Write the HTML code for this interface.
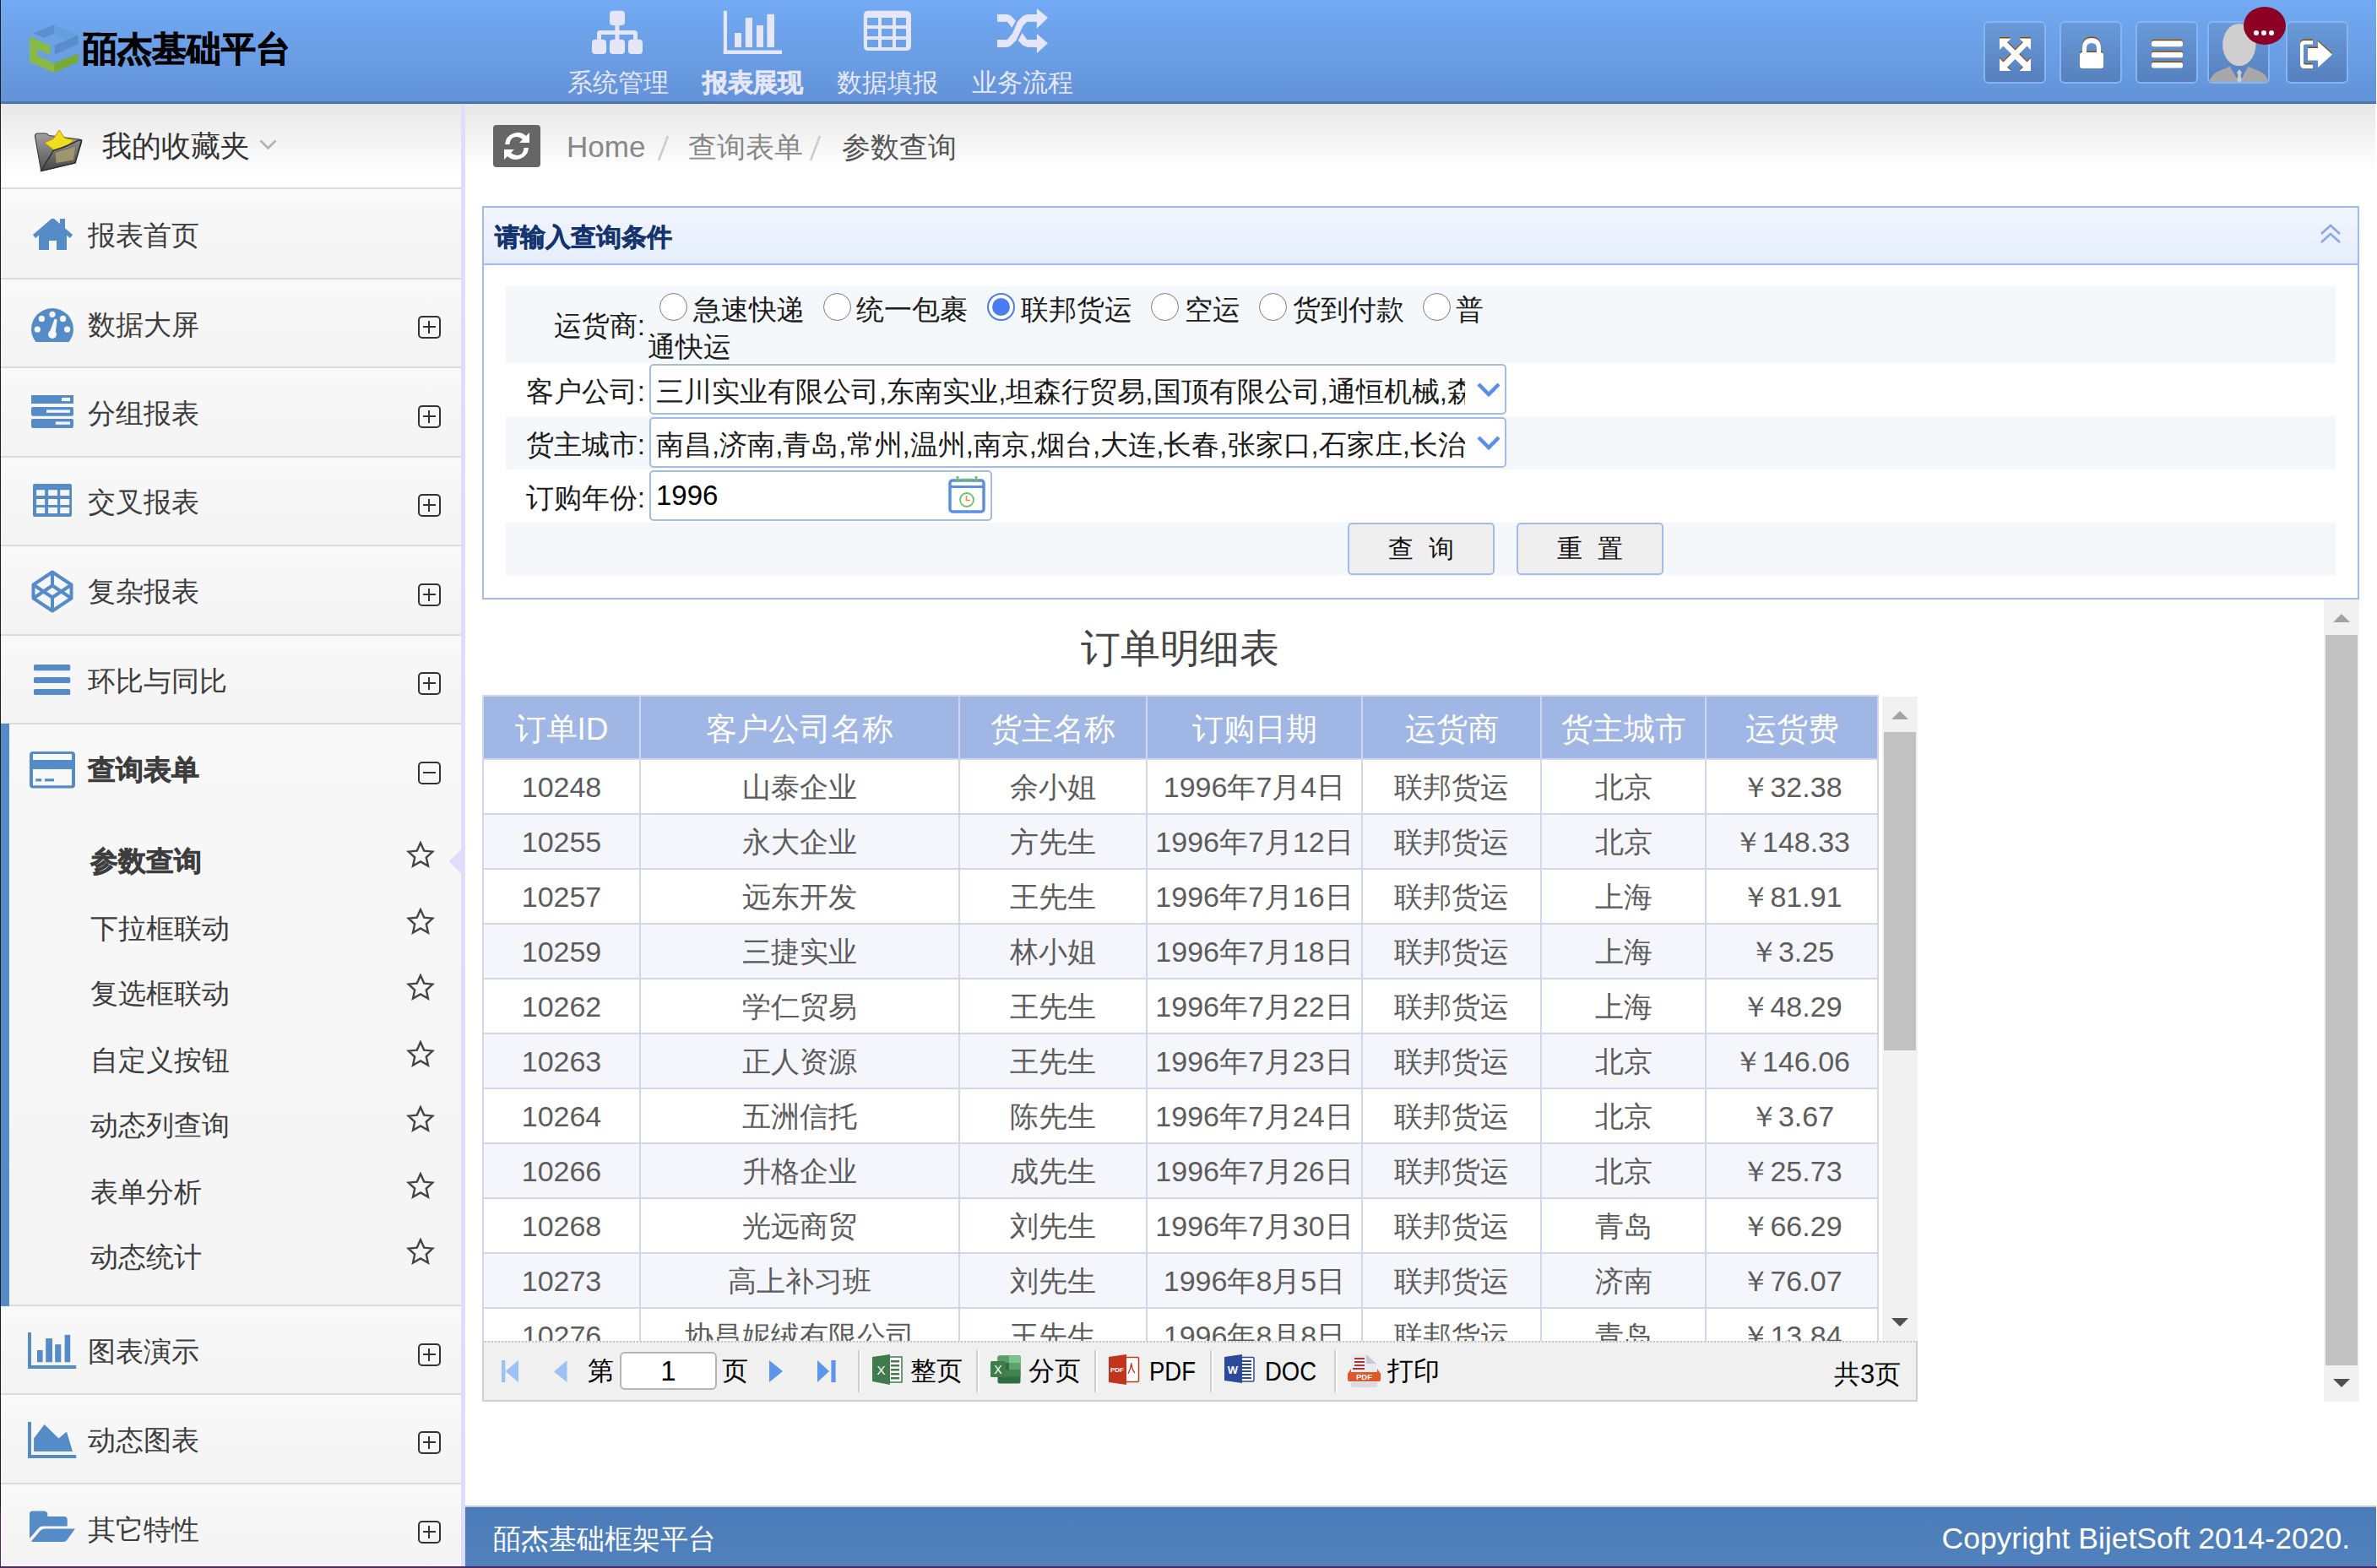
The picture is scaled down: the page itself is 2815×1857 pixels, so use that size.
<!DOCTYPE html>
<html><head><meta charset="utf-8">
<style>
*{box-sizing:border-box;margin:0;padding:0}
html,body{width:2815px;height:1857px;overflow:hidden;background:#fff;font-family:"Liberation Sans",sans-serif}
.abs{position:absolute}
#winl{position:absolute;left:0;top:0;width:1px;height:1857px;background:linear-gradient(#1e1e1e 0,#1e1e1e 1780px,#4a2a5c 1800px)}
#winb{position:absolute;left:0;top:1855px;width:2815px;height:2px;background:#4e2a62}
/* header */
#hdr{position:absolute;left:1px;top:0;width:2813px;height:122px;background:linear-gradient(#72aaf3,#6393d8);border-bottom:2px solid #4d76ae}
.nav{position:absolute;top:0;height:119px;color:#e6e6fa;font-size:30px;text-align:center;white-space:nowrap}
.nav svg{position:absolute}
.nav span{position:absolute;left:0;right:0;top:79px;line-height:38px}
.tbtn{position:absolute;top:25px;width:74px;height:74px;border:2px solid #86b5f2;border-radius:6px;background:linear-gradient(#6a9ad9,#5580bd)}
/* sidebar */
#side{position:absolute;left:1px;top:122px;width:546px;height:1733px;background:#f7f7f7}
#sideb{position:absolute;left:546px;top:122px;width:5px;height:1733px;background:#dedefc}
.fav{position:absolute;left:0;top:0;width:546px;height:102px;background:linear-gradient(#e7e7e7,#fff 85%);border-bottom:2px solid #dcdcdc}
.mi{position:absolute;left:0;width:546px;background:linear-gradient(#f9f9f9,#f3f3f3);border-bottom:2px solid #dcdcdc;font-size:33px;color:#3d3d3d}
.mi .t{position:absolute;left:103px;line-height:40px}
.mi svg{position:absolute}
.pbox{position:absolute;left:494px;width:27px;height:27px;border:2.5px solid #333;border-radius:5px}
.pbox:before{content:"";position:absolute;left:4px;right:4px;top:10px;height:2px;background:#333}
.pbox.p:after{content:"";position:absolute;top:4px;bottom:4px;left:10px;width:2px;background:#333}
.sub{position:absolute;left:106px;font-size:33px;color:#3d3d3d;line-height:40px}
.star{position:absolute;left:480px}
/* main */
#crumb{position:absolute;left:551px;top:122px;width:2262px;height:100px;background:linear-gradient(#e6e6e6,#fff 80%)}
.lbl{position:absolute;left:560px;width:204px;text-align:right;font-size:33px;line-height:44px;color:#1c1c1c;white-space:nowrap}
.rad{position:absolute;width:33px;height:33px;border:1.5px solid #777;border-radius:50%;background:#fff}
.rad.on{border:2px solid #4c7df0}
.rad.on:after{content:"";position:absolute;left:4px;top:4px;width:21px;height:21px;border-radius:50%;background:#4c7df0}
.rtx{position:absolute;font-size:33px;line-height:44px;color:#1c1c1c;white-space:nowrap}
.sel{position:absolute;left:769px;width:1015px;height:60px;border:2px solid #a3bbe8;border-radius:5px;background:#fff;overflow:hidden}
.sel span{position:absolute;left:6px;top:9px;font-size:33px;line-height:44px;color:#1c1c1c;white-space:nowrap;width:958px;overflow:hidden}
.btn{position:absolute;top:619px;width:174px;height:62px;border:2px solid #a3bbe8;border-radius:5px;background:#efefef;font-size:30px;line-height:58px;text-align:center;color:#111;white-space:pre;letter-spacing:5px;padding-left:5px}
.rt{border-collapse:collapse;table-layout:fixed;width:1654px;font-size:34px;color:#5c5c5c}
.rt td{border:2px solid #d0d7ec;text-align:center;height:65px;padding:0;white-space:nowrap;overflow:hidden;line-height:40px}
.rt tr.hd td{background:#a0b6e4;color:#fff;font-size:37px;height:75px;padding-top:4px}
.rt tr.alt td{background:#f5f6fb}
.rt tr td{background:#fff}
.ttx{position:absolute;top:1604px;font-size:31px;line-height:40px;color:#000;white-space:nowrap}
.ttx.lat{font-size:32px;transform:scaleX(0.86);transform-origin:0 0}
.tsep{position:absolute;top:1599px;width:4px;height:50px;border-left:2px solid #cfcfcf;border-right:2px solid #fafafa}
</style></head><body>
<div id="winl"></div>
<div id="hdr"></div>
<svg class="abs" style="left:35px;top:29px" width="59" height="59" viewBox="0 0 59 59">
 <polygon points="4.1,10.3 29.4,0.2 29.4,10.9 17.4,15.5" fill="#5a90d2"/>
 <polygon points="29.4,0.2 57.6,12.6 43.9,18.6 29.4,10.9" fill="#62a0dd"/>
 <polygon points="43.9,18.6 57.6,12.6 57.6,23 29.8,35.8 29.8,25" fill="#5a8bcb"/>
 <polygon points="0,14.2 24.8,25 24.8,36.2 9.9,29.6 9.9,37.4 29.4,45.7 29.4,57.3 0,44.3" fill="#89b947"/>
 <polygon points="29.4,45.7 57.8,34.5 57.8,44 29.4,57.3" fill="#77ab36"/>
</svg>
<div class="abs" style="left:98px;top:26px;font-size:41px;font-weight:bold;-webkit-text-stroke:0.8px #000;color:#000;line-height:64px;white-space:nowrap;letter-spacing:0px">皕杰基础平台</div>
<div class="nav" style="left:652px;width:160px">
 <svg style="left:49px;top:12px" width="61" height="53" viewBox="0 0 61 53">
  <g fill="#e6e6fa">
  <rect x="21" y="0.8" width="18" height="17.2" rx="4"/>
  <rect x="27.4" y="16" width="5" height="20"/>
  <path d="M6,34.7 V28 Q6,24 10,24 H50 Q54,24 54,28 V34.7 H49 V29 H11 V34.7Z"/>
  <rect x="0" y="34.7" width="17" height="17.3" rx="4"/>
  <rect x="21" y="34.7" width="18" height="17.3" rx="4"/>
  <rect x="43" y="34.7" width="17" height="17.3" rx="4"/>
  </g>
 </svg>
 <span>系统管理</span></div>
<div class="nav" style="left:811px;width:160px;font-weight:bold">
 <svg style="left:45px;top:12px" width="71" height="53" viewBox="0 0 71 53">
  <g fill="#e6e6fa">
  <rect x="0.8" y="0.8" width="4.2" height="51.2"/>
  <rect x="0.8" y="47.5" width="69.2" height="4.5"/>
  <rect x="14" y="27" width="8" height="16.9"/>
  <rect x="26.8" y="9" width="8.2" height="34.9"/>
  <rect x="39.9" y="18" width="8.1" height="25.9"/>
  <rect x="52.4" y="4.8" width="8.6" height="39.1"/>
  </g>
 </svg>
 <span style="letter-spacing:-0.5px;-webkit-text-stroke:0.6px #e6e6fa">报表展现</span></div>
<div class="nav" style="left:971px;width:160px">
 <svg style="left:51px;top:12px" width="58" height="50" viewBox="0 0 58 50">
  <path fill="#e6e6fa" fill-rule="evenodd" d="M6,0.8 H51 Q57,0.8 57,7 V42 Q57,48 51,48 H6 Q0.8,48 0.8,42 V7 Q0.8,0.8 6,0.8Z M5,9 V18 H18 V9Z M22,9 V18 H35 V9Z M39,9 V18 H51 V9Z M5,22 V31 H18 V22Z M22,22 V31 H35 V22Z M39,22 V31 H51 V22Z M5,35 V44 H18 V35Z M22,35 V44 H35 V35Z M39,35 V44 H51 V35Z"/>
 </svg>
 <span>数据填报</span></div>
<div class="nav" style="left:1131px;width:160px">
 <svg style="left:48px;top:9px" width="64" height="56" viewBox="0 0 64 56">
  <g fill="#e6e6fa">
   <polygon points="2,8 13.8,8 17,9 20,11.5 23.9,15.8 19.3,23.8 16,19.5 13.8,16.8 2,16.8"/>
   <polygon points="2,38.1 13.8,38.1 20.1,30.5 26,16.6 32.3,9.9 37.4,8 49,8 49,16.8 37.4,16.8 32.7,21.2 24.7,38.5 17.6,45.6 13.8,46.9 2,46.9"/>
   <polygon points="31.5,30 37.4,38.1 49,38.1 49,46.9 38.2,46.9 32.3,44.8 26.9,38.9"/>
   <polygon points="48.9,1 62,12 48.9,24.8"/>
   <polygon points="48.9,30.9 62,42.2 48.9,54"/>
  </g>
 </svg>
 <span>业务流程</span></div>
<div class="tbtn" style="left:2349px"></div>
<svg class="abs" style="left:2366px;top:43px" width="42" height="44" viewBox="0 0 42 44">
 <defs><g id="expi">
  <path d="M2,2.5 H15.5 L11,7 L20.5,16.5 L30,7 L25.5,2.5 H39 V16 L34.5,11.5 L25,21 L34.5,30.5 L39,26 V41 H25.5 L30,36.5 L20.5,27 L11,36.5 L15.5,41 H2 V26 L6.5,30.5 L16,21 L6.5,11.5 L2,16Z"/>
 </g></defs>
 <use href="#expi" fill="#8a4a00" transform="translate(0,-1.5)"/>
 <use href="#expi" fill="#fff"/>
</svg>
<div class="tbtn" style="left:2439px"></div>
<svg class="abs" style="left:2460px;top:43px" width="34" height="40" viewBox="0 0 34 40">
 <defs><g id="locki">
  <path d="M6,19 V14 Q6,2 17,2 Q28,2 28,14 V19 H23 V14 Q23,8 17,8 Q11,8 11,14 V19Z"/>
  <rect x="3" y="19" width="28" height="19" rx="3"/>
 </g></defs>
 <use href="#locki" fill="#8a4a00" transform="translate(0,-1.5)"/>
 <use href="#locki" fill="#fff"/>
</svg>
<div class="tbtn" style="left:2529px"></div>
<svg class="abs" style="left:2546px;top:44px" width="42" height="38" viewBox="0 0 42 38">
 <defs><g id="hami">
  <rect x="2" y="4.3" width="37" height="6.9" rx="2.5"/>
  <rect x="2" y="17.8" width="37" height="6.4" rx="2"/>
  <rect x="2" y="30" width="37" height="6.5" rx="2"/>
 </g></defs>
 <use href="#hami" fill="#8a4a00" transform="translate(0,-1.5)"/>
 <use href="#hami" fill="#fff"/>
</svg>
<div class="tbtn" style="left:2614px;overflow:hidden">
 <svg class="abs" style="left:0;top:0" width="70" height="70" viewBox="0 0 70 70">
  <ellipse cx="35.8" cy="26" rx="19.7" ry="25.1" fill="#cfcfcf"/>
  <path d="M0,71 Q2,61 13,56.5 L24.7,51.7 L36,71 L46.4,51.7 L58,56.5 Q69,61 71,71Z" fill="#a8a8a8"/>
  <path d="M33,59 L36,55 L39,59 L37.5,62 L39,68 L36,71 L33,68 L34.5,62Z" fill="#cfcfcf"/>
 </svg>
</div>
<svg class="abs" style="left:2656px;top:7px" width="52" height="47" viewBox="0 0 52 47">
 <ellipse cx="26" cy="23.5" rx="25" ry="22.5" fill="#8b0024"/>
 <circle cx="16" cy="32" r="3" fill="#fff"/><circle cx="25" cy="32" r="3" fill="#fff"/><circle cx="34" cy="32" r="3" fill="#fff"/>
</svg>
<div class="tbtn" style="left:2707px"></div>
<svg class="abs" style="left:2722px;top:46px" width="42" height="38" viewBox="0 0 42 38">
 <defs><g id="exiti">
  <path d="M17,2 V6.5 H8 Q6,6.5 6,8.5 V28.5 Q6,30.5 8,30.5 H17 V35 H7 Q2,35 2,30 V7 Q2,2 7,2Z"/>
  <path d="M11,11 H23 V3 L40,18.5 L23,34 V25.5 H11Z"/>
 </g></defs>
 <use href="#exiti" fill="#8a4a00" transform="translate(0,-1.5)"/>
 <use href="#exiti" fill="#fff"/>
</svg>
<div id="side">
<div class="fav">
 <svg class="abs" style="left:39px;top:31px" width="60" height="52" viewBox="0 0 60 52">
  <defs><linearGradient id="fg1" x1="0" y1="0" x2="0" y2="1"><stop offset="0" stop-color="#a0a0a0"/><stop offset="1" stop-color="#505050"/></linearGradient>
  <linearGradient id="fg2" x1="0" y1="0" x2="0" y2="1"><stop offset="0" stop-color="#8a8a8a"/><stop offset="1" stop-color="#474747"/></linearGradient></defs>
  <path d="M1.5,8.5 Q1.5,5 5,5 L14,5 Q16,5 18,7.5 L54,12 Q57.5,12.5 56.5,15.5 L49,40 L8.7,49.5Z" fill="url(#fg1)" stroke="#3a3a3a" stroke-width="1.2"/>
  <polygon points="30.2,1 36.5,10.5 47.6,12.7 40,19.5 24,25 12.8,16 23,11.5" fill="#eedf1e" stroke="#c88a00" stroke-width="1"/>
  <path d="M23.2,25.2 Q38,21 53,13.1 L56.5,13 L49,40 L8.7,49.5Z" fill="url(#fg2)" stroke="#2e2e2e" stroke-width="1.4"/>
  <polygon points="25.5,28 49,21 47,36.5 26.5,40" fill="#a89d6e" opacity="0.85"/>
 </svg>
 <div class="abs" style="left:120px;top:30px;font-size:35px;color:#333;line-height:42px;white-space:nowrap">我的收藏夹</div>
 <svg class="abs" style="left:306px;top:43px" width="21" height="13" viewBox="0 0 21 13"><path d="M1.5,1.5 L10.5,10.5 L19.5,1.5" fill="none" stroke="#b0b0b0" stroke-width="2.5"/></svg>
</div>
<div class="mi" style="top:103px;height:106px">
 <svg style="left:38px;top:34px" width="47" height="38" viewBox="0 0 47 38"><g fill="#558bc7"><path d="M1.5,21 L23.5,2 L45.5,21" fill="none" stroke="#558bc7" stroke-width="5"/><rect x="32" y="0" width="6" height="12"/><path d="M7,18 L23.5,4 L40,18 V37 H28 V26 H19 V37 H7Z"/></g></svg>
 <div class="t" style="top:33.5px">报表首页</div>
</div>
<div class="mi" style="top:209px;height:105px">
 <svg style="left:36px;top:34px" width="50" height="40" viewBox="0 0 50 40"><path d="M5.5,40 Q0,33 0,25 A25,25 0 0 1 50,25 Q50,33 44.5,40Z" fill="#558bc7"/><g fill="#f6f6f6"><circle cx="25" cy="7.3" r="3.6"/><circle cx="12.4" cy="12.4" r="3.6"/><circle cx="37.6" cy="12.4" r="3.6"/><circle cx="7.3" cy="25.2" r="3.6"/><circle cx="42.6" cy="25.2" r="3.6"/><circle cx="25" cy="31" r="5"/><path d="M21.5,29 L27.5,13 Q29.5,12 30.5,14 L28.5,31Z"/></g></svg>
 <div class="t" style="top:34px">数据大屏</div>
 <div class="pbox p" style="top:43.19999999999999px"></div>
</div>
<div class="mi" style="top:314px;height:106px">
 <svg style="left:36px;top:32px" width="50" height="39" viewBox="0 0 50 39"><g fill="#558bc7"><rect x="0" y="0" width="50" height="10"/><rect x="0" y="14" width="50" height="10.8" rx="2"/><rect x="0" y="28" width="50" height="11" rx="2"/></g><g fill="#f6f6f6"><rect x="36" y="3" width="10" height="4"/><rect x="18" y="17.4" width="28" height="3.4"/><rect x="28.8" y="31.4" width="17.2" height="3.4"/></g></svg>
 <div class="t" style="top:34px">分组报表</div>
 <div class="pbox p" style="top:43.5px"></div>
</div>
<div class="mi" style="top:420px;height:105px">
 <svg style="left:38px;top:31px" width="46" height="39" viewBox="0 0 46 39"><path fill="#558bc7" fill-rule="evenodd" d="M2,0 H44 Q46,0 46,2 V37 Q46,39 44,39 H2 Q0,39 0,37 V2 Q0,0 2,0Z M4.1,7.2 V14.1 H14.1 V7.2Z M18.1,7.2 V14.1 H29 V7.2Z M32.2,7.2 V14.1 H43.2 V7.2Z M4.1,18.1 V25 H14.1 V18.1Z M18.1,18.1 V25 H29 V18.1Z M32.2,18.1 V25 H43.2 V18.1Z M4.1,28.1 V35.1 H14.1 V28.1Z M18.1,28.1 V35.1 H29 V28.1Z M32.2,28.1 V35.1 H43.2 V28.1Z"/></svg>
 <div class="t" style="top:33px">交叉报表</div>
 <div class="pbox p" style="top:43.299999999999955px"></div>
</div>
<div class="mi" style="top:525px;height:106px">
 <svg style="left:36px;top:28px" width="50" height="51" viewBox="0 0 50 51"><g fill="none" stroke="#558bc7" stroke-width="4" stroke-linejoin="round"><polygon points="25,2.5 47.5,17.5 47.5,33.5 25,48.5 2.5,33.5 2.5,17.5"/><path d="M25,2.5 V19 M25,32 V48.5 M2.5,17.5 L25,32.5 L47.5,17.5 M2.5,33.5 L25,18.5 L47.5,33.5"/></g></svg>
 <div class="t" style="top:33.60000000000002px">复杂报表</div>
 <div class="pbox p" style="top:43.5px"></div>
</div>
<div class="mi" style="top:631px;height:105px">
 <svg style="left:39px;top:34px" width="44" height="37" viewBox="0 0 44 37"><g fill="#558bc7"><rect x="0" y="0" width="43.2" height="7.2" rx="1.5"/><rect x="0" y="15" width="43.2" height="7" rx="1.5"/><rect x="0" y="29" width="43.2" height="7" rx="1.5"/></g></svg>
 <div class="t" style="top:34px">环比与同比</div>
 <div class="pbox p" style="top:43.299999999999955px"></div>
</div>
<div class="mi" style="top:736px;height:689px;background:linear-gradient(#f8f8f8,#f4f4f4)">
 <svg style="left:34px;top:32px" width="54" height="44" viewBox="0 0 54 44"><g fill="#558bc7"><path fill-rule="evenodd" d="M4,0 H50 Q54,0 54,4 V39.5 Q54,43.5 50,43.5 H4 Q0,43.5 0,39.5 V4 Q0,0 4,0Z M4,3 V10 H50 V3Z M4,21 V40.3 H50 V21Z"/><rect x="7.2" y="32.2" width="7" height="3.2"/><rect x="18" y="32.2" width="11" height="3.2"/></g></svg>
 <div class="t" style="top:34px;font-weight:bold;-webkit-text-stroke:0.7px currentColor">查询表单</div>
 <div class="pbox" style="top:43.5px"></div>
</div>
<div class="abs" style="left:0;top:735px;width:10px;height:690px;background:#558bc7"></div>
<div class="sub" style="top:878px;font-weight:bold;-webkit-text-stroke:0.7px currentColor">参数查询</div>
<svg class="star" style="top:874.0px" width="34" height="33" viewBox="0 0 34 33"><polygon points="17,2.2 21.2,11.6 31.4,12.6 23.8,19.5 26,29.6 17,24.4 8,29.6 10.2,19.5 2.6,12.6 12.8,11.6" fill="none" stroke="#444" stroke-width="2.4" stroke-linejoin="miter"/></svg>
<div class="sub" style="top:957.7px">下拉框联动</div>
<svg class="star" style="top:953.0px" width="34" height="33" viewBox="0 0 34 33"><polygon points="17,2.2 21.2,11.6 31.4,12.6 23.8,19.5 26,29.6 17,24.4 8,29.6 10.2,19.5 2.6,12.6 12.8,11.6" fill="none" stroke="#444" stroke-width="2.4" stroke-linejoin="miter"/></svg>
<div class="sub" style="top:1035.4px">复选框联动</div>
<svg class="star" style="top:1031.1px" width="34" height="33" viewBox="0 0 34 33"><polygon points="17,2.2 21.2,11.6 31.4,12.6 23.8,19.5 26,29.6 17,24.4 8,29.6 10.2,19.5 2.6,12.6 12.8,11.6" fill="none" stroke="#444" stroke-width="2.4" stroke-linejoin="miter"/></svg>
<div class="sub" style="top:1114px">自定义按钮</div>
<svg class="star" style="top:1109.5px" width="34" height="33" viewBox="0 0 34 33"><polygon points="17,2.2 21.2,11.6 31.4,12.6 23.8,19.5 26,29.6 17,24.4 8,29.6 10.2,19.5 2.6,12.6 12.8,11.6" fill="none" stroke="#444" stroke-width="2.4" stroke-linejoin="miter"/></svg>
<div class="sub" style="top:1191px">动态列查询</div>
<svg class="star" style="top:1187.2px" width="34" height="33" viewBox="0 0 34 33"><polygon points="17,2.2 21.2,11.6 31.4,12.6 23.8,19.5 26,29.6 17,24.4 8,29.6 10.2,19.5 2.6,12.6 12.8,11.6" fill="none" stroke="#444" stroke-width="2.4" stroke-linejoin="miter"/></svg>
<div class="sub" style="top:1269.7px">表单分析</div>
<svg class="star" style="top:1265.5px" width="34" height="33" viewBox="0 0 34 33"><polygon points="17,2.2 21.2,11.6 31.4,12.6 23.8,19.5 26,29.6 17,24.4 8,29.6 10.2,19.5 2.6,12.6 12.8,11.6" fill="none" stroke="#444" stroke-width="2.4" stroke-linejoin="miter"/></svg>
<div class="sub" style="top:1347px">动态统计</div>
<svg class="star" style="top:1343.5px" width="34" height="33" viewBox="0 0 34 33"><polygon points="17,2.2 21.2,11.6 31.4,12.6 23.8,19.5 26,29.6 17,24.4 8,29.6 10.2,19.5 2.6,12.6 12.8,11.6" fill="none" stroke="#444" stroke-width="2.4" stroke-linejoin="miter"/></svg>
<div class="mi" style="top:1425px;height:105px">
 <svg style="left:32px;top:31px" width="58" height="44" viewBox="0 0 58 44"><g fill="#558bc7"><rect x="0" y="0" width="4" height="43"/><rect x="0" y="39" width="57.2" height="4"/><rect x="11" y="21" width="6.6" height="14.2"/><rect x="21.2" y="7.1" width="7.8" height="28.1"/><rect x="32.2" y="14.2" width="7.1" height="21"/><rect x="43.6" y="2.9" width="6.6" height="32.3"/></g></svg>
 <div class="t" style="top:34px">图表演示</div>
 <div class="pbox p" style="top:43.5px"></div>
</div>
<div class="mi" style="top:1530px;height:106px">
 <svg style="left:32px;top:32px" width="58" height="44" viewBox="0 0 58 44"><g fill="#558bc7"><rect x="0" y="0" width="4" height="43"/><rect x="0" y="39" width="57.2" height="4"/><path d="M7.1,35 L7.1,19.5 L19.6,3 L36.5,19.5 L45.9,11.4 L53,35Z"/></g></svg>
 <div class="t" style="top:34px">动态图表</div>
 <div class="pbox p" style="top:43.200000000000045px"></div>
</div>
<div class="mi" style="top:1636px;height:97px;border-bottom:0">
 <svg style="left:34px;top:31px" width="54" height="40" viewBox="0 0 54 40"><g fill="#558bc7"><path d="M0,4 Q0,0.5 3.5,0.5 H17.5 Q20,0.5 21.2,3 V7 H41.2 Q44.7,7 44.7,10.5 V18.4 H16 Q12,18.4 10,21.4 L0,33Z"/><path d="M2,36.5 L12.5,24 Q14.5,21.5 18,21.5 H54 L44.5,34.5 Q43,37 40,37 H3Z"/></g></svg>
 <div class="t" style="top:33.5px">其它特性</div>
 <div class="pbox p" style="top:43.200000000000045px"></div>
</div>
</div>
<div id="sideb"></div>
<svg class="abs" style="left:531px;top:1005px" width="16" height="31" viewBox="0 0 16 31"><polygon points="0.8,15.3 15.5,0.5 15.5,30.4" fill="#dedefc"/></svg>
<div id="crumb"></div>
<div class="abs" style="left:584px;top:148px;width:56px;height:50px;background:#666;border-radius:4px"></div>
<svg class="abs" style="left:593px;top:153px" width="38" height="40" viewBox="0 0 38 40">
 <g fill="#fff">
  <path d="M5,18 Q6,8 15,5 Q24,2 30,8 L34,4 V16 H22 L26,12 Q21,8 16,9.5 Q11,11 10.5,18Z"/>
  <path d="M33,22 Q32,32 23,35 Q14,38 8,32 L4,36 V24 H16 L12,28 Q17,32 22,30.5 Q27,29 27.5,22Z"/>
 </g>
</svg>
<div class="abs" style="left:671px;top:150px;line-height:48px;font-size:35px;color:#888;white-space:nowrap">Home</div>
<svg class="abs" style="left:778px;top:160px" width="15" height="31" viewBox="0 0 15 31"><path d="M13,1 L2,30" stroke="#cccccc" stroke-width="2.6"/></svg>
<div class="abs" style="left:815px;top:150px;line-height:48px;font-size:34px;color:#888;white-space:nowrap">查询表单</div>
<svg class="abs" style="left:958px;top:160px" width="15" height="31" viewBox="0 0 15 31"><path d="M13,1 L2,30" stroke="#cccccc" stroke-width="2.6"/></svg>
<div class="abs" style="left:997px;top:150px;line-height:48px;font-size:34px;color:#555;white-space:nowrap">参数查询</div>
<!-- query panel -->
<div class="abs" style="left:571px;top:244px;width:2223px;height:466px;border:2px solid #a3bbe8;background:#fff"></div>
<div class="abs" style="left:573px;top:246px;width:2219px;height:68px;background:linear-gradient(#f1f5fe,#e5edfc);border-bottom:2px solid #a3bbe8"></div>
<div class="abs" style="left:586px;top:261px;font-size:30px;font-weight:bold;-webkit-text-stroke:0.6px currentColor;color:#15336e;line-height:40px;white-space:nowrap">请输入查询条件</div>
<svg class="abs" style="left:2746px;top:264px" width="28" height="26" viewBox="0 0 28 26"><g fill="none" stroke="#86a8e6" stroke-width="2.6"><path d="M3,13 L14,3 L25,13"/><path d="M3,23 L14,13 L25,23"/></g></svg>
<div class="abs" style="left:599px;top:339px;width:2167px;height:91px;background:#f5f8fa"></div>
<div class="abs" style="left:599px;top:493px;width:2167px;height:63px;background:#f5f8fa"></div>
<div class="abs" style="left:599px;top:619px;width:2167px;height:63px;background:#f5f8fa"></div>
<div class="lbl" style="top:364px">运货商:</div>
<div class="lbl" style="top:442px">客户公司:</div>
<div class="lbl" style="top:505px">货主城市:</div>
<div class="lbl" style="top:568px">订购年份:</div>
<div class="rad" style="left:781px;top:347px"></div><div class="rtx" style="left:821px;top:345px">急速快递</div>
<div class="rad" style="left:975px;top:347px"></div><div class="rtx" style="left:1014px;top:345px">统一包裹</div>
<div class="rad on" style="left:1169px;top:347px"></div><div class="rtx" style="left:1209px;top:345px">联邦货运</div>
<div class="rad" style="left:1363px;top:347px"></div><div class="rtx" style="left:1403px;top:345px">空运</div>
<div class="rad" style="left:1491px;top:347px"></div><div class="rtx" style="left:1531px;top:345px">货到付款</div>
<div class="rad" style="left:1685px;top:347px"></div><div class="rtx" style="left:1724px;top:345px">普</div>
<div class="rtx" style="left:767px;top:389px">通快运</div>
<div class="sel" style="top:431px"><span>三川实业有限公司,东南实业,坦森行贸易,国顶有限公司,通恒机械,森</span></div>
<div class="sel" style="top:494px"><span>南昌,济南,青岛,常州,温州,南京,烟台,大连,长春,张家口,石家庄,长治</span></div>
<svg class="abs" style="left:1748px;top:452px" width="30" height="20" viewBox="0 0 30 20"><path d="M3,3 L15,15 L27,3" fill="none" stroke="#5b8fe6" stroke-width="4.5"/></svg>
<svg class="abs" style="left:1748px;top:515px" width="30" height="20" viewBox="0 0 30 20"><path d="M3,3 L15,15 L27,3" fill="none" stroke="#5b8fe6" stroke-width="4.5"/></svg>
<div class="abs" style="left:769px;top:557px;width:406px;height:60px;border:2px solid #a3bbe8;border-radius:5px;background:#fff"></div>
<div class="abs" style="left:777px;top:567px;font-size:33px;line-height:40px;color:#000">1996</div>
<svg class="abs" style="left:1122px;top:563px" width="46" height="46" viewBox="0 0 46 46">
 <rect x="3" y="6" width="40" height="37" rx="3" fill="none" stroke="#5b8fe6" stroke-width="3.5"/>
 <rect x="3" y="12" width="40" height="3" fill="#5b8fe6"/>
 <g stroke="#6cbf6c" stroke-width="3"><path d="M12,1 V8 M34,1 V8"/><path d="M16,5 H30" stroke-width="2.5"/></g>
 <circle cx="23" cy="29" r="8" fill="none" stroke="#6cbf6c" stroke-width="1.8"/>
 <path d="M22.5,24 V29.5 H27" fill="none" stroke="#f08a24" stroke-width="1.6"/>
</svg>
<div class="btn" style="left:1596px">查 询</div>
<div class="btn" style="left:1796px">重 置</div>

<div class="abs" style="left:572px;top:738px;width:1650px;text-align:center;font-size:47px;line-height:60px;color:#444;white-space:nowrap">订单明细表</div>
<div class="abs" style="left:571px;top:823px;width:1656px;height:766px;overflow:hidden">
<table class="rt">
<colgroup><col style="width:186px"><col style="width:378px"><col style="width:222px"><col style="width:255px"><col style="width:212px"><col style="width:195px"><col style="width:204px"></colgroup>
<tr class="hd"><td>订单ID</td><td>客户公司名称</td><td>货主名称</td><td>订购日期</td><td>运货商</td><td>货主城市</td><td>运货费</td></tr>
<tr><td>10248</td><td>山泰企业</td><td>余小姐</td><td>1996年7月4日</td><td>联邦货运</td><td>北京</td><td>￥32.38</td></tr>
<tr class=alt><td>10255</td><td>永大企业</td><td>方先生</td><td>1996年7月12日</td><td>联邦货运</td><td>北京</td><td>￥148.33</td></tr>
<tr><td>10257</td><td>远东开发</td><td>王先生</td><td>1996年7月16日</td><td>联邦货运</td><td>上海</td><td>￥81.91</td></tr>
<tr class=alt><td>10259</td><td>三捷实业</td><td>林小姐</td><td>1996年7月18日</td><td>联邦货运</td><td>上海</td><td>￥3.25</td></tr>
<tr><td>10262</td><td>学仁贸易</td><td>王先生</td><td>1996年7月22日</td><td>联邦货运</td><td>上海</td><td>￥48.29</td></tr>
<tr class=alt><td>10263</td><td>正人资源</td><td>王先生</td><td>1996年7月23日</td><td>联邦货运</td><td>北京</td><td>￥146.06</td></tr>
<tr><td>10264</td><td>五洲信托</td><td>陈先生</td><td>1996年7月24日</td><td>联邦货运</td><td>北京</td><td>￥3.67</td></tr>
<tr class=alt><td>10266</td><td>升格企业</td><td>成先生</td><td>1996年7月26日</td><td>联邦货运</td><td>北京</td><td>￥25.73</td></tr>
<tr><td>10268</td><td>光远商贸</td><td>刘先生</td><td>1996年7月30日</td><td>联邦货运</td><td>青岛</td><td>￥66.29</td></tr>
<tr class=alt><td>10273</td><td>高上补习班</td><td>刘先生</td><td>1996年8月5日</td><td>联邦货运</td><td>济南</td><td>￥76.07</td></tr>
<tr><td>10276</td><td>协昌妮绒有限公司</td><td>王先生</td><td>1996年8月8日</td><td>联邦货运</td><td>青岛</td><td>￥13.84</td></tr>
</table>
</div>
<div class="abs" style="left:2229px;top:825px;width:42px;height:764px;background:#f1f1f1"></div>
<div class="abs" style="left:2231px;top:867px;width:38px;height:377px;background:#c1c1c1"></div>
<svg class="abs" style="left:2239px;top:841px" width="22" height="12" viewBox="0 0 22 12"><polygon points="1,11 11,1 21,11" fill="#a3a3a3"/></svg>
<svg class="abs" style="left:2239px;top:1560px" width="22" height="12" viewBox="0 0 22 12"><polygon points="1,1 11,11 21,1" fill="#505050"/></svg>
<!-- outer scrollbar -->
<div class="abs" style="left:2752px;top:710px;width:42px;height:950px;background:#f1f1f1"></div>
<div class="abs" style="left:2754px;top:752px;width:38px;height:865px;background:#c1c1c1"></div>
<svg class="abs" style="left:2762px;top:726px" width="22" height="12" viewBox="0 0 22 12"><polygon points="1,11 11,1 21,11" fill="#a3a3a3"/></svg>
<svg class="abs" style="left:2762px;top:1632px" width="22" height="12" viewBox="0 0 22 12"><polygon points="1,1 11,11 21,1" fill="#505050"/></svg>
<div class="abs" style="left:571px;top:1588px;width:1700px;height:72px;background:#f0f0f0;border:2px solid #d0d0d0;border-top:2px dotted #c4c4c4"></div>
<svg class="abs" style="left:593px;top:1610px" width="400" height="28" viewBox="0 0 400 28">
 <g fill="#9bc2f2"><rect x="1" y="1" width="4.4" height="26"/><polygon points="21,1 21,27 5.5,14"/><polygon points="78.5,1 78.5,27 63,14.5"/></g>
 <g fill="#5b96ea"><polygon points="318,1 334,14 318,27"/><polygon points="375,1 389,14 375,27"/><rect x="391.4" y="1" width="5.2" height="26"/></g>
</svg>
<div class="ttx" style="left:696px">第</div>
<div class="abs" style="left:734px;top:1601px;width:115px;height:45px;border:2px solid #b4b4b4;border-radius:6px;background:#fff;text-align:center;font-size:33px;line-height:41px;color:#000">1</div>
<div class="ttx" style="left:855px">页</div>
<div class="tsep" style="left:1016px"></div>
<div class="tsep" style="left:1156px"></div>
<div class="tsep" style="left:1296px"></div>
<div class="tsep" style="left:1433px"></div>
<div class="tsep" style="left:1580px"></div>
<svg class="abs" style="left:1033px;top:1604px" width="36" height="36" viewBox="0 0 36 36">
 <rect x="19" y="3" width="16" height="30" fill="#fff" stroke="#3e7c4b" stroke-width="1.5"/>
 <g fill="#3e7c4b"><rect x="22" y="7" width="10" height="2.5"/><rect x="22" y="12" width="10" height="2.5"/><rect x="22" y="17" width="10" height="2.5"/><rect x="22" y="22" width="10" height="2.5"/><rect x="22" y="27" width="10" height="2.5"/></g>
 <polygon points="0,3 21,0 21,36 0,32" fill="#417a4c"/>
 <text x="10.5" y="23.5" font-family="Liberation Sans" font-size="15" fill="#fff" text-anchor="middle">X</text>
</svg>
<div class="ttx" style="left:1078px">整页</div>
<svg class="abs" style="left:1173px;top:1605px" width="36" height="34" viewBox="0 0 36 34">
 <rect x="8.5" y="0.5" width="27" height="33" rx="2" fill="#2f6e3f"/>
 <rect x="8.5" y="0.5" width="27" height="8.5" rx="2" fill="#56a06a"/>
 <rect x="22" y="0.5" width="13.5" height="8.5" fill="#7cc48b"/>
 <rect x="22" y="9" width="13.5" height="8.5" fill="#5aa46e"/>
 <rect x="8.5" y="17.5" width="27" height="8" fill="#3f8350"/>
 <rect x="0" y="7" width="18" height="19" rx="1.5" fill="#3f7d4a"/>
 <text x="9" y="22" font-family="Liberation Sans" font-size="14" fill="#fff" text-anchor="middle">X</text>
</svg>
<div class="ttx" style="left:1218px">分页</div>
<svg class="abs" style="left:1313px;top:1604px" width="37" height="36" viewBox="0 0 37 36">
 <rect x="19" y="3.5" width="16.5" height="29" rx="1.5" fill="#fff" stroke="#c9341f" stroke-width="1.5"/>
 <path d="M27,10 Q26,17 23,23 M27,12 Q28,19 31,22" fill="none" stroke="#c9341f" stroke-width="1.4"/>
 <polygon points="0,3 21,0 21,36 0,33" fill="#c3341c"/>
 <text x="10" y="21" font-family="Liberation Sans" font-size="8" font-weight="bold" fill="#fff" text-anchor="middle">PDF</text>
</svg>
<div class="ttx lat" style="left:1361px">PDF</div>
<svg class="abs" style="left:1450px;top:1604px" width="36" height="36" viewBox="0 0 36 36">
 <rect x="20" y="3.5" width="15" height="28.5" rx="1.5" fill="#fff" stroke="#2b4a9a" stroke-width="1.5"/>
 <g fill="#2b4a9a"><rect x="21" y="7" width="11" height="2"/><rect x="21" y="11" width="11" height="2"/><rect x="21" y="15" width="11" height="2"/><rect x="21" y="19" width="11" height="2"/><rect x="21" y="23" width="11" height="2"/><rect x="21" y="27" width="11" height="2"/></g>
 <polygon points="0,3 21,0 21,34 0,31" fill="#2d4a9a"/>
 <text x="10" y="22.5" font-family="Liberation Sans" font-size="13" font-weight="bold" fill="#fff" text-anchor="middle">W</text>
</svg>
<div class="ttx lat" style="left:1498px">DOC</div>
<svg class="abs" style="left:1596px;top:1603px" width="39" height="41" viewBox="0 0 39 41">
 <rect x="4" y="28" width="31" height="12" rx="2" fill="#d9dbe3"/>
 <path d="M4,1 H22 L34,12 V34 H4Z" fill="#e9eaee"/>
 <path d="M22,1 L34,12 H22Z" fill="#c6c9d3"/>
 <g fill="#a33a3a"><rect x="8" y="5" width="12" height="2"/><rect x="8" y="9" width="12" height="2"/><rect x="8" y="13" width="12" height="2"/><rect x="6" y="17" width="14" height="2"/></g>
 <path d="M0,24 L4,18 V22 H35 V18 L39,24 V31 Q39,33 37,33 H2 Q0,33 0,31Z" fill="#e0572a"/>
 <text x="19.5" y="30.5" font-family="Liberation Sans" font-size="9.5" font-weight="bold" fill="#fff" text-anchor="middle">PDF</text>
</svg>
<div class="ttx" style="left:1643px">打印</div>
<div class="ttx" style="left:2172px;top:1608px">共3页</div>
<div class="abs" style="left:551px;top:1783px;width:2263px;height:72px;background:linear-gradient(#4a7bb8,#5282bd);border-top:2px solid #c8c8c8"></div>
<div class="abs" style="left:584px;top:1801px;font-size:33px;line-height:44px;color:#fff;white-space:nowrap">皕杰基础框架平台</div>
<div class="abs" style="left:2183px;top:1800px;width:600px;text-align:right;font-size:35.5px;line-height:44px;color:#fff;white-space:nowrap">Copyright BijetSoft 2014-2020.</div>
<div class="abs" style="left:1px;top:122px;width:2813px;height:1px;background:#4a70a6"></div>
<div id="winb"></div>
</body></html>
